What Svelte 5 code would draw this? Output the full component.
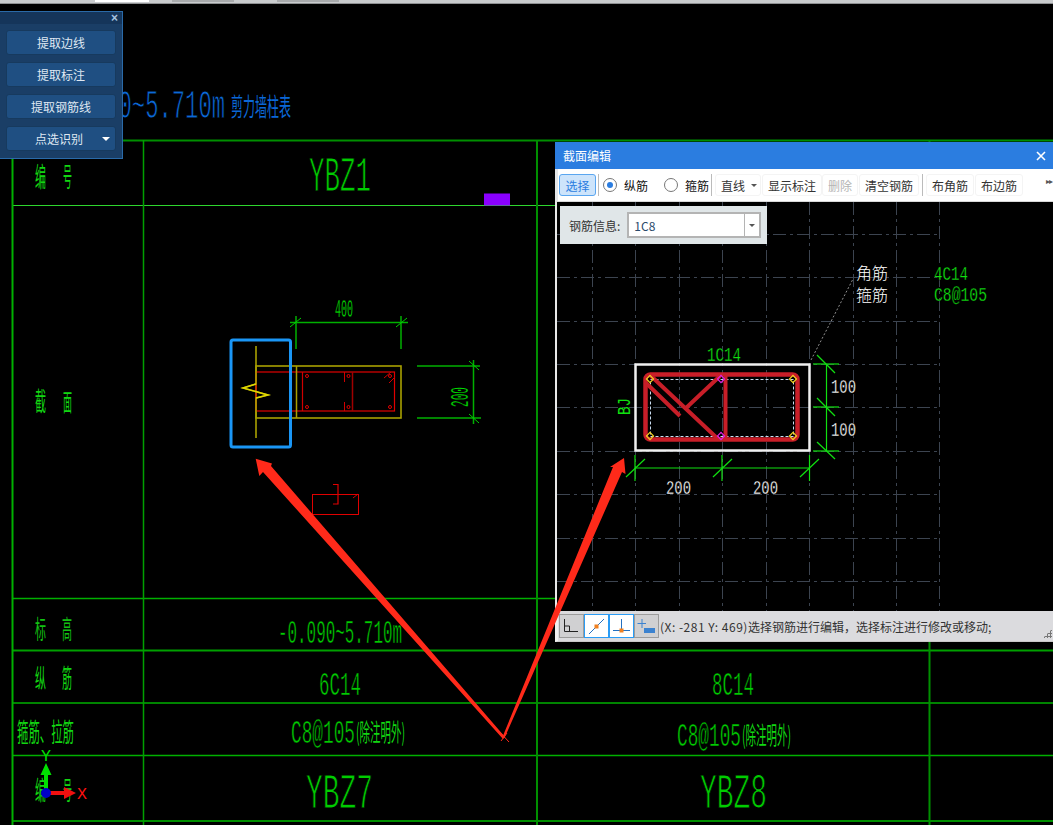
<script>
  const grn = '#00cc00';
  const hLines = [
    { x1: 12, y: 140.5, x2: 1053, c: '#008f00', w: 2 },
    { x1: 12, y: 205.5, x2: 555, c: '#2ed62e', w: 1 },
    { x1: 12, y: 598.5, x2: 555, c: '#00b000', w: 1.5 },
    { x1: 12, y: 650.5, x2: 1053, c: '#00a000', w: 2 },
    { x1: 12, y: 703, x2: 1053, c: '#00b000', w: 1.5 },
    { x1: 12, y: 755.5, x2: 1053, c: '#00b000', w: 1.5 },
    { x1: 12, y: 821, x2: 1053, c: '#008f00', w: 2 }
  ];
  const vLines = [
    { x: 12.5, y1: 140, y2: 825, c: '#00b000', w: 2 },
    { x: 143.5, y1: 140, y2: 825, c: '#00a000', w: 1.5 },
    { x: 537, y1: 140, y2: 825, c: '#008f00', w: 2 },
    { x: 929.5, y1: 140, y2: 825, c: '#008f00', w: 2 }
  ];
  const lat = [
    { t: '-0.090~5.710m', x: 52, y: 118, w: 173, s: 40, c: '#0b68d8', e: 0.9 },
    { t: 'YBZ1', x: 309, y: 191, w: 62, s: 50, c: grn, e: 1.1 },
    { t: '-0.090~5.710m', x: 278, y: 643, w: 124, s: 34, c: grn, e: 0.6 },
    { t: '6C14', x: 319, y: 695, w: 42, s: 33, c: grn, e: 0.6 },
    { t: '8C14', x: 712, y: 695, w: 42, s: 33, c: grn, e: 0.6 },
    { t: 'C8@105', x: 291, y: 743, w: 64, s: 34, c: grn, e: 0.6 },
    { t: 'C8@105', x: 677, y: 746, w: 64, s: 34, c: grn, e: 0.6 },
    { t: 'YBZ7', x: 306, y: 808, w: 67, s: 50, c: grn, e: 1.1 },
    { t: 'YBZ8', x: 700, y: 808, w: 67, s: 50, c: grn, e: 1.1 },
    { t: '400', x: 335, y: 317, w: 18, s: 26, c: '#00d800', e: 0.3 },
    { t: '200', x: 468, y: 407, w: 20, s: 26, c: '#00d800', e: 0.3, rot: true },
    { t: 'Y', x: 41, y: 761, w: 10, s: 17, c: '#00e000', e: 0 },
    { t: 'X', x: 77, y: 799, w: 10, s: 17, c: '#ff1010', e: 0 }
  ];
  const cjk = [
    { t: '剪力墙柱表', x: 231, y: 116, w: 60, s: 25, c: '#0b68d8' },
    { t: '编', x: 35, y: 187, w: 11, s: 27, c: '#12d612' },
    { t: '号', x: 63, y: 187, w: 9, s: 27, c: '#12d612' },
    { t: '截', x: 35, y: 411, w: 11, s: 26, c: '#12d612' },
    { t: '面', x: 63, y: 411, w: 9, s: 24, c: '#12d612' },
    { t: '标', x: 35, y: 639, w: 11, s: 26, c: '#12c012' },
    { t: '高', x: 62, y: 639, w: 10, s: 26, c: '#12c012' },
    { t: '纵', x: 35, y: 688, w: 11, s: 26, c: '#12d612' },
    { t: '筋', x: 62, y: 688, w: 10, s: 26, c: '#12d612' },
    { t: '箍筋、拉筋', x: 17, y: 742, w: 57, s: 26, c: '#12d612' },
    { t: '编', x: 35, y: 800, w: 11, s: 26, c: '#12d612' },
    { t: '号', x: 63, y: 800, w: 9, s: 26, c: '#12d612' },
    { t: '(除注明外)', x: 356, y: 741, w: 49, s: 24, c: '#12d612' },
    { t: '(除注明外)', x: 742, y: 744, w: 49, s: 24, c: '#12d612' }
  ];
  const segs = [
    [290, 322.5, 408, 322.5, '#00b000', 1.5], [296, 316, 296, 349, '#00b000', 1.5], [401, 316, 401, 349, '#00b000', 1.5],
    [290, 327, 301, 318, '#00d000', 1], [396, 327, 407, 318, '#00d000', 1],
    [417, 366, 480, 366, '#00b000', 1.5], [417, 418, 481, 418, '#00b000', 1.5], [473.5, 360, 473.5, 424, '#00b000', 1.5],
    [469, 361, 479, 370, '#00d000', 1], [469, 414, 479, 423, '#00d000', 1],
    [296.5, 366, 296.5, 418, '#a8a000', 1.5],
    [352.5, 372, 352.5, 411, '#a00000', 1.5],
    [302.5, 372, 302.5, 411, '#d00000', 1.2],
    [344.5, 372, 344.5, 382, '#d00000', 1], [344.5, 402, 344.5, 411, '#d00000', 1],
    [384, 378, 391, 372, '#d00000', 1], [389, 383, 395, 377, '#d00000', 1],
    [353, 498, 358, 494, '#d00000', 1]
  ];
  const dots = [[307, 376], [348.5, 376], [390, 376], [307, 407], [348.5, 407], [390, 407]];

  const gridV = [592, 635, 679, 722, 766, 809, 853, 896, 939];
  const gridH = [234, 277, 321, 364, 407, 451, 494, 538, 581];
  const dim = '#10e010';
  const dlgSegs = [
    [635, 468, 810, 468], [635, 455, 635, 481], [722, 455, 722, 481], [809.5, 455, 809.5, 481],
    [626, 477, 645, 459], [713, 477, 732, 459], [800, 477, 819, 459],
    [826.5, 364, 826.5, 451], [813, 364, 839, 364], [813, 407, 839, 407], [813, 451, 839, 451],
    [817, 355, 835, 373], [817, 398, 835, 416], [817, 442, 835, 459]
  ];
  const corners = [[650, 379, '#f0d020'], [650, 436, '#f0d020'], [793, 379, '#f0d020'], [793, 436, '#f0d020'], [721, 379, '#e020e0'], [721, 436, '#e020e0']];
  const dlgText = [
    { t: '4C14', x: 934, y: 280, w: 34, s: 20, c: dim },
    { t: 'C8@105', x: 934, y: 301, w: 53, s: 20, c: dim },
    { t: '1C14', x: 707, y: 361, w: 34, s: 20, c: dim },
    { t: '100', x: 831, y: 393, w: 25, s: 20, c: '#fff' },
    { t: '100', x: 831, y: 436, w: 25, s: 20, c: '#fff' },
    { t: '200', x: 666, y: 494, w: 25, s: 20, c: '#fff' },
    { t: '200', x: 753, y: 494, w: 25, s: 20, c: '#fff' }
  ];
  const tools = ['提取边线', '提取标注', '提取钢筋线'];
</script>

<div class="screen">
  <div class="topbar">
    <span class="tab white"></span>
    <span class="tab grey"></span>
    <span class="tab grey"></span>
  </div>

  <svg class="cad" width="1053" height="825" viewBox="0 0 1053 825">
    {#each hLines as l}
      <line x1={l.x1} x2={l.x2} y1={l.y} y2={l.y} stroke={l.c} stroke-width={l.w} />
    {/each}
    {#each vLines as l}
      <line x1={l.x} x2={l.x} y1={l.y1} y2={l.y2} stroke={l.c} stroke-width={l.w} />
    {/each}
    <rect x="484" y="193.500" width="26" height="12" fill="#8a00ff" />

    {#each lat as a}
      <text class="mono" x={a.x} y={a.y} font-size={a.s} fill={a.c} stroke="#000" stroke-width={a.e}
        textLength={a.w} lengthAdjust="spacingAndGlyphs"
        transform={a.rot ? `rotate(-90 ${a.x} ${a.y})` : undefined}>{a.t}</text>
    {/each}
    {#each cjk as a}
      <text class="han" x={a.x} y={a.y} font-size={a.s} fill={a.c} textLength={a.w} lengthAdjust="spacingAndGlyphs">{a.t}</text>
    {/each}

    <rect x="256" y="366" width="145" height="52" fill="none" stroke="#a8a000" stroke-width="1.600" />
    <rect x="256" y="372" width="138.500" height="39" fill="none" stroke="#e00000" stroke-width="1.200" />
    <path d="M256 346V384L243 388L268 395L256 398V438" fill="none" stroke="#a8a000" stroke-width="1.600" />
    <path d="M256 384L243 388L268 395L256 398" fill="none" stroke="#e0d800" stroke-width="1.400" />
    {#each segs as s}
      <line x1={s[0]} y1={s[1]} x2={s[2]} y2={s[3]} stroke={s[4]} stroke-width={s[5]} />
    {/each}
    {#each dots as d}
      <circle cx={d[0]} cy={d[1]} r="1.500" fill="none" stroke="#e00000" />
    {/each}
    <rect x="312.500" y="494.500" width="46" height="20" fill="none" stroke="#e00000" stroke-width="1" />
    <path d="M333 484.500H338V504H333" fill="none" stroke="#e00000" stroke-width="1.200" />
    <rect x="231" y="340" width="59.500" height="107" rx="2" fill="none" stroke="#1a96f5" stroke-width="3" />

    <path d="M44 775H40.500L46 763L51.500 775H48V793H44Z" fill="#00e000" />
    <path d="M46 791H64V787L76 793L64 799V795H46Z" fill="#f01010" />
    <circle cx="46" cy="793" r="5" fill="#0000c8" />
  </svg>

  <section class="tools">
    <header class="tools-head"><span class="tools-x">×</span></header>
    <div class="tools-body">
      {#each tools as t}
        <button class="tool">{t}</button>
      {/each}
      <button class="tool tool-menu">点选识别<i class="tool-caret"></i></button>
    </div>
  </section>

  <section class="dialog">
    <header class="dlg-title">
      <span>截面编辑</span>
      <svg width="10" height="10" viewBox="0 0 10 10"><path d="M1 1L9 9M9 1L1 9" stroke="#fff" stroke-width="1.600" /></svg>
    </header>
    <div class="dlg-tools">
      <button class="tb select">选择</button>
      <span class="sep"></span>
      <span class="radio on"></span><span class="rlabel first">纵筋</span>
      <span class="radio"></span><span class="rlabel">箍筋</span>
      <span class="sep"></span>
      <button class="tb line">直线<i class="caret"></i></button>
      <button class="tb">显示标注</button>
      <button class="tb off">删除</button>
      <button class="tb">清空钢筋</button>
      <span class="sep wide"></span>
      <button class="tb corner">布角筋</button>
      <button class="tb">布边筋</button>
      <span class="more">▸▸</span>
    </div>
    <div class="dlg-canvas">
      <svg class="section" width="496" height="409" viewBox="557 202 496 409">
        {#each gridV as x}
          <line x1={x + 0.5} x2={x + 0.5} y1="202" y2="611" stroke="#3c4450" stroke-dasharray="13 4 3 4" />
        {/each}
        {#each gridH as y}
          <line x1="557" x2="940" y1={y + 0.5} y2={y + 0.5} stroke="#3c4450" stroke-dasharray="13 4 3 4" />
        {/each}
        <line x1="811" y1="360" x2="853" y2="279" stroke="#909090" stroke-dasharray="2 2" />
        <rect x="635.500" y="364.500" width="174" height="86" fill="none" stroke="#f0f0f0" stroke-width="2.500" />
        <rect x="650.500" y="379.500" width="143" height="57" fill="none" stroke="#c8dcf0" stroke-dasharray="3 2" />
        <rect x="645.500" y="374.500" width="152" height="65" rx="5" fill="none" stroke="#c81e28" stroke-width="4.500" />
        <path d="M725.500 374V440M650 375L718 439M720 376L686 408M645 382L680 416" fill="none" stroke="#c81e28" stroke-width="4" />
        {#each corners as c}
          <rect x={c[0] - 2.5} y={c[1] - 2.5} width="5" height="5" fill="none" stroke={c[2]} stroke-width="1.200"
            transform={`rotate(45 ${c[0]} ${c[1]})`} />
        {/each}
        {#each dlgSegs as s}
          <line x1={s[0]} y1={s[1]} x2={s[2]} y2={s[3]} stroke={dim} stroke-width="1.200" />
        {/each}
        {#each dlgText as a}
          <text class="mono" x={a.x} y={a.y} font-size={a.s} fill={a.c} stroke="#000" stroke-width="0.300" textLength={a.w} lengthAdjust="spacingAndGlyphs">{a.t}</text>
        {/each}
        <text class="mono" x="630" y="415" font-size="18" fill={dim} textLength="17" lengthAdjust="spacingAndGlyphs" transform="rotate(-90 630 415)">BJ</text>
        <text class="han thin" x="856" y="279" font-size="16" fill="#fff" textLength="32" lengthAdjust="spacingAndGlyphs">角筋</text>
        <text class="han thin" x="856" y="301" font-size="16" fill="#fff" textLength="32" lengthAdjust="spacingAndGlyphs">箍筋</text>
      </svg>
      <div class="info">
        <label for="rebar">钢筋信息:</label>
        <div class="combo"><input id="rebar" value="1C8" /><span class="combo-btn"><i class="caret"></i></span></div>
      </div>
    </div>
    <footer class="status">
      <button class="snap" aria-label="正交">
        <svg width="23" height="22" viewBox="0 0 23 22"><path d="M4.500 4V16.500H18M4.500 11H9.500V16.500" fill="none" stroke="#222" stroke-width="1" /></svg>
      </button>
      <button class="snap active" aria-label="中点">
        <svg width="23" height="22" viewBox="0 0 23 22"><path d="M4 19L19 4" stroke="#2470c0" stroke-width="1" /><rect x="9.500" y="9.500" width="4" height="4" fill="#f08020" /></svg>
      </button>
      <button class="snap active" aria-label="垂足">
        <svg width="23" height="22" viewBox="0 0 23 22"><path d="M11.500 4V15.500M3 15.500H20" stroke="#2470c0" stroke-width="1" /><rect x="9.500" y="13.500" width="4" height="4" fill="#f08020" /></svg>
      </button>
      <button class="snap" aria-label="动态输入">
        <svg width="23" height="22" viewBox="0 0 23 22"><path d="M7 4V13M2.500 8.500H11" stroke="#3b82d0" stroke-width="1" /><rect x="9" y="13" width="11" height="5" fill="#3b82d0" /></svg>
      </button>
      <span class="msg"><span class="coord">(X: -281 Y: 469)</span>选择钢筋进行编辑，选择标注进行修改或移动;</span>
      <span class="grip"></span>
    </footer>
  </section>

  <svg class="over" width="1053" height="825" viewBox="0 0 1053 825">
    <path d="M255.700 458.700L272 463.500L271 466L505 737L503 739L263 472L259.300 476Z" fill="#ff2a1a" />
    <path d="M624 458L625.500 474L622 472L504.500 738L502.500 737L613 467L610 467Z" fill="#ff2a1a" />
    <path d="M498 730L509 742M501 741L507 733" stroke="#ff2a1a" stroke-width="1" fill="none" />
  </svg>
</div>

<style>
  :global(body) { margin: 0; background: #000; }
  .screen {
    position: relative; width: 1053px; height: 825px; overflow: hidden; background: #000;
    font-family: "Noto Sans CJK SC", "Liberation Sans", sans-serif; font-size: 12px;
  }
  .topbar {
    height: 4px; background: #c9cbcd; border-bottom: 1px solid #8e9092; box-sizing: border-box;
    display: flex; align-items: flex-start; padding-left: 95px;
  }
  .tab { height: 2px; display: block; }
  .tab.white { width: 54px; background: #fff; margin-right: 23px; }
  .tab.grey { width: 62px; background: #a8aaac; margin-right: 43px; }

  .cad, .over { position: absolute; left: 0; top: 0; display: block; }
  .cad { z-index: 0; }
  .over { z-index: 3; pointer-events: none; }
  .mono { font-family: "Liberation Mono", monospace; paint-order: fill stroke; }
  .han { font-family: "Noto Sans CJK SC", sans-serif; font-weight: 400; }
  .han.thin { font-weight: 300; }

  .tools {
    position: absolute; z-index: 5; left: -1px; top: 11px; width: 124px; height: 148px; box-sizing: border-box;
    border: 1px solid #2a6aa8; background: #1a3e66;
    display: flex; flex-direction: column;
  }
  .tools-head {
    height: 12px; background: #15355a; display: flex; justify-content: flex-end; align-items: center; padding-right: 4px;
  }
  .tools-x { color: #a8c4e0; font: 700 12px/12px "Liberation Sans", sans-serif; }
  .tools-body { display: flex; flex-direction: column; gap: 7px; padding: 6px 6px 0 6px; }
  .tool {
    position: relative; height: 25px; padding: 0; border: 1px solid #173a5e; border-radius: 3px;
    background: #1f4f82; color: #dfe8f2; font: inherit; font-size: 12px;
  }
  .tool-menu { padding-right: 4px; }
  .tool-caret {
    position: absolute; right: 5px; top: 10px; width: 0; height: 0;
    border: 4px solid transparent; border-top-color: #fff; border-bottom-width: 0;
  }

  .dialog {
    position: absolute; z-index: 2; left: 555px; top: 142px; width: 498px; height: 500px;
    display: flex; flex-direction: column; background: #000;
  }
  .dlg-title {
    height: 27px; flex: none; background: #2b7de0; color: #fff; font-size: 12px; box-sizing: border-box;
    display: flex; align-items: center; justify-content: space-between; padding: 0 7px 0 8px;
  }
  .dlg-tools {
    height: 33px; flex: none; box-sizing: border-box; background: #fff; border-left: 3px solid #e4e6e8; border-bottom: 1px solid #d8d8d8;
    display: flex; align-items: center; color: #222; padding-left: 1px; position: relative;
  }
  .tb {
    height: 22px; padding: 0 5px; margin: 0; border: 1px solid #f4f4f4; border-radius: 3px; background: #fff;
    color: #333; font: inherit; font-size: 12px; white-space: nowrap; display: flex; align-items: center;
  }
  .tb.select { width: 37px; padding: 0; justify-content: center; background: #cde4fb; border-color: #5aa6f0; color: #2b7de0; }
  .tb.line { width: 46px; margin: 0 1px 0 3px; box-sizing: border-box; }
  .tb.line .caret { margin-left: 6px; }
  .tb.off { color: #b4b4b4; margin-right: 1px; }
  .tb.corner { margin-right: 1px; }
  .sep { width: 1px; height: 22px; background: #bbb; margin: 0 0 0 2px; flex: none; }
  .sep.wide { margin: 0 3px; }
  .radio {
    width: 12px; height: 12px; border: 1px solid #777; border-radius: 50%; margin-left: 4px; position: relative; flex: none; background: #fff;
  }
  .radio.on::after {
    content: ""; position: absolute; left: 3px; top: 3px; width: 6px; height: 6px; border-radius: 50%; background: #2b7de0;
  }
  .rlabel { margin-left: 7px; color: #111; }
  .rlabel.first { margin-right: 12px; }
  .more { position: absolute; right: 1px; top: 8px; font-size: 8px; letter-spacing: -1px; color: #555; font-family: "DejaVu Sans", sans-serif; }
  .caret {
    display: inline-block; width: 0; height: 0; border: 3px solid transparent; border-top-color: #555; border-bottom-width: 0;
  }

  .dlg-canvas { flex: 1; position: relative; border-left: 2px solid #e8e8e8; background: #000; overflow: hidden; }
  .section { display: block; }
  .info {
    position: absolute; left: 3px; top: 4px; width: 207px; height: 38px; box-sizing: border-box; background: #e0e6e8;
    display: flex; align-items: center; padding-left: 9px; gap: 7px; color: #333;
  }
  .combo { width: 134px; height: 26px; box-sizing: border-box; border: 2px solid #b4b4b4; background: #fff; display: flex; }
  .combo input {
    flex: 1; min-width: 0; border: 0; outline: 0; padding: 0 0 0 5px; font: inherit; font-size: 12px; color: #2a4a6a; background: #fff;
  }
  .combo-btn { width: 14px; border-left: 1px solid #b4b4b4; display: flex; align-items: center; justify-content: center; }

  .status {
    height: 31px; flex: none; box-sizing: border-box; background: #dbdbde; border-left: 3px solid #f0f0f0; border-bottom: 1px solid #c8c8c8;
    display: flex; align-items: center; padding-left: 1px; position: relative; color: #333;
  }
  .snap {
    width: 25px; height: 24px; padding: 0; box-sizing: border-box; border: 1px solid #9c9c9c; background: #d0d0d2;
    display: flex; align-items: center; justify-content: center;
  }
  .snap.active { background: #fff; border: 1.5px solid #2a9cf5; }
  .msg { margin-left: 1px; white-space: nowrap; font-size: 12px; }
  .coord { letter-spacing: 0.5px; }
  .grip {
    position: absolute; right: 1px; bottom: 3px; width: 9px; height: 9px;
    background: radial-gradient(circle, #777 1px, transparent 1.2px) 0 0 / 3px 3px;
    clip-path: polygon(100% 0, 100% 100%, 0 100%);
  }
</style>
